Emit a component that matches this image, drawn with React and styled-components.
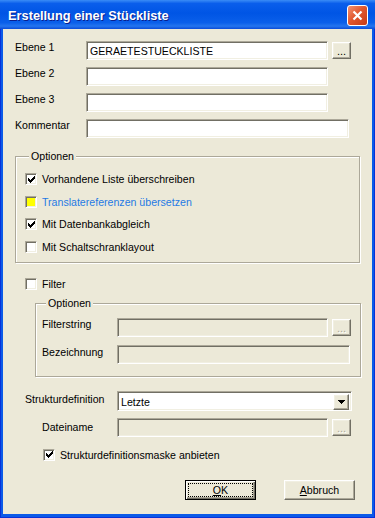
import React from "react";
import styled, { createGlobalStyle } from "styled-components";

const GlobalStyle = createGlobalStyle`
  html, body {
    margin: 0;
    padding: 0;
    background: #ffffff;
  }
  body {
    font-family: "Liberation Sans", Arial, sans-serif;
    font-size: 10.6px;
    color: #000000;
  }
  * {
    box-sizing: border-box;
  }
`;

const Window = styled.div`
  width: 375px;
  height: 518px;
  display: flex;
  flex-direction: column;
  background: #0b5ae8;
  box-shadow: inset 1px 0 0 #0831d9, inset -1px 0 0 #0831d9, inset 0 -1px 0 #0831d9;
`;

const TitleBar = styled.div`
  height: 29px;
  flex: none;
  display: flex;
  align-items: center;
  justify-content: space-between;
  padding: 2px 7px 0 8px;
  background: linear-gradient(
    180deg,
    #3a8cf6 0%,
    #0a5eeb 12%,
    #0055e5 45%,
    #0a5fea 78%,
    #2475ef 90%,
    #0a4bd8 100%
  );
`;

const Title = styled.span`
  color: #ffffff;
  font-weight: bold;
  font-size: 12.8px;
  text-shadow: 1px 1px 0 #0a1e8c;
`;

const CloseButton = styled.div`
  width: 21px;
  height: 21px;
  border: 1px solid #ffffff;
  border-radius: 3px;
  background: linear-gradient(135deg, #f29373 0%, #e2582f 45%, #c63a14 100%);
  display: flex;
  align-items: center;
  justify-content: center;
`;

const Client = styled.div`
  flex: 1;
  margin: 0 3px 4px;
  background: #ece9d8;
  padding: 12px 0 0 12px;
  display: flex;
  flex-direction: column;
`;

const Stack = styled.div`
  display: flex;
  flex-direction: column;
  gap: ${(p) => p.$gap}px;
`;

const FieldRow = styled.div`
  display: flex;
  align-items: center;
  height: ${(p) => p.$h || 19}px;
  margin-top: ${(p) => p.$mt || 0}px;
  padding-left: ${(p) => p.$indent || 0}px;
`;

const Label = styled.span`
  width: ${(p) => p.$w}px;
  flex: none;
  align-self: flex-start;
  line-height: 13px;
  padding-top: ${(p) => p.$dy || 0}px;
  white-space: nowrap;
`;

const TextField = styled.div`
  width: ${(p) => p.$w}px;
  height: 19px;
  flex: none;
  background: ${(p) => (p.$disabled ? "#ece9d8" : "#ffffff")};
  border: 1px solid;
  border-color: #aca899 #ffffff #ffffff #aca899;
  box-shadow: inset 1px 1px 0 #716f64, inset -1px -1px 0 #f1efe2;
  padding: 2px 0 0 3px;
  line-height: 14px;
  white-space: nowrap;
  overflow: hidden;
`;

const Raised = styled.div`
  background: #ece9d8;
  border: 1px solid;
  border-color: #ffffff #716f64 #716f64 #ffffff;
  box-shadow: inset -1px -1px 0 #aca899, inset 1px 1px 0 #f1efe2;
`;

const DotsButton = styled(Raised)`
  width: 19px;
  height: 17px;
  flex: none;
  margin-left: 4px;
  display: flex;
  justify-content: center;
  align-items: flex-end;
  padding-bottom: 3px;
  line-height: 8px;
  font-size: 11px;
  color: ${(p) => (p.$disabled ? "#aca899" : "#000000")};
  text-shadow: ${(p) => (p.$disabled ? "1px 1px 0 #ffffff" : "none")};
`;

const Combo = styled(TextField)`
  height: 20px;
  display: flex;
  align-items: flex-start;
  justify-content: space-between;
  padding: 2px 2px 0 3px;
`;

const ComboText = styled.span`
  line-height: 14px;
  padding-top: 1px;
`;

const ComboArrow = styled(Raised)`
  width: 16px;
  height: 16px;
  display: flex;
  align-items: center;
  justify-content: center;
`;

const Group = styled.fieldset`
  margin: ${(p) => p.$mt}px 0 0 ${(p) => p.$ml}px;
  width: ${(p) => p.$w}px;
  min-width: 0;
  padding: ${(p) => p.$pad};
  border: 1px solid #aca899;
  box-shadow: inset 1px 1px 0 #ffffff, 1px 1px 0 #ffffff;
  display: flex;
  flex-direction: column;
  gap: ${(p) => p.$gap}px;
`;

const Legend = styled.legend`
  padding: 0 2px;
  margin-left: 4px;
  line-height: 13px;
  background: #ece9d8;
`;

const CheckRow = styled.div`
  display: flex;
  align-items: center;
  gap: 5px;
  height: 14px;
  margin-top: ${(p) => p.$mt || 0}px;
  padding-left: ${(p) => p.$indent || 0}px;
  color: ${(p) => (p.$blue ? "#1f7ae4" : "#000000")};
  white-space: nowrap;
`;

const Box = styled.span`
  width: 12px;
  height: 12px;
  flex: none;
  background: ${(p) => (p.$yellow ? "#ffff00" : "#ffffff")};
  border: 1px solid;
  border-color: #aca899 #ffffff #ffffff #aca899;
  box-shadow: inset 1px 1px 0 #716f64, inset -1px -1px 0 #f1efe2;
  display: flex;
  align-items: center;
  justify-content: center;
`;

const ButtonRow = styled.div`
  display: flex;
  justify-content: flex-end;
  gap: 28px;
  margin-top: 18px;
  padding-right: 17px;
`;

const PushButton = styled(Raised)`
  width: 71px;
  height: 20px;
  display: flex;
  align-items: center;
  justify-content: center;
  padding: 2px;
  ${(p) =>
    p.$default &&
    `
    border: 1px solid #000000;
    box-shadow: inset 1px 1px 0 #ffffff, inset -1px -1px 0 #716f64, inset -2px -2px 0 #aca899;
  `}
`;

const FocusRing = styled.span`
  flex: 1;
  align-self: stretch;
  display: flex;
  align-items: center;
  justify-content: center;
  border: 1px dotted ${(p) => (p.$on ? "#000000" : "transparent")};
  line-height: 12px;
`;

const CHECK_TOPS = [2, 3, 4, 3, 2, 1, 0];

function CheckMark() {
  return (
    <svg width="7" height="7" viewBox="0 0 7 7" shapeRendering="crispEdges">
      {CHECK_TOPS.map((t, i) => (
        <rect key={i} x={i} y={t} width="1" height="3" fill="#000" />
      ))}
    </svg>
  );
}

function Check({ checked, yellow, blue, children, indent, mt }) {
  return (
    <CheckRow $blue={blue} $indent={indent} $mt={mt}>
      <Box $yellow={yellow}>{checked && <CheckMark />}</Box>
      <span>{children}</span>
    </CheckRow>
  );
}

function CloseIcon() {
  return (
    <svg width="11" height="11" viewBox="0 0 11 11">
      <path d="M1.5 1.5 L9.5 9.5 M9.5 1.5 L1.5 9.5" stroke="#fff" strokeWidth="2.2" />
    </svg>
  );
}

function ArrowIcon() {
  return (
    <svg width="7" height="4" viewBox="0 0 7 4" shapeRendering="crispEdges">
      <rect x="0" y="0" width="7" height="1" fill="#000" />
      <rect x="1" y="1" width="5" height="1" fill="#000" />
      <rect x="2" y="2" width="3" height="1" fill="#000" />
      <rect x="3" y="3" width="1" height="1" fill="#000" />
    </svg>
  );
}

export default function App() {
  return (
    <>
      <GlobalStyle />
      <Window>
        <TitleBar>
          <Title>Erstellung einer Stückliste</Title>
          <CloseButton>
            <CloseIcon />
          </CloseButton>
        </TitleBar>
        <Client>
          <Stack $gap={7}>
            <FieldRow>
              <Label $w={71}>Ebene 1</Label>
              <TextField $w={242}>GERAETESTUECKLISTE</TextField>
              <DotsButton>...</DotsButton>
            </FieldRow>
            <FieldRow>
              <Label $w={71}>Ebene 2</Label>
              <TextField $w={242} />
            </FieldRow>
            <FieldRow>
              <Label $w={71}>Ebene 3</Label>
              <TextField $w={242} />
            </FieldRow>
            <FieldRow>
              <Label $w={71}>Kommentar</Label>
              <TextField $w={263} />
            </FieldRow>
          </Stack>

          <Group $mt={12} $ml={0} $w={345} $pad="9px 0 8px 9px" $gap={8.5}>
            <Legend>Optionen</Legend>
            <Check checked>Vorhandene Liste überschreiben</Check>
            <Check yellow blue>
              Translatereferenzen übersetzen
            </Check>
            <Check checked>Mit Datenbankabgleich</Check>
            <Check>Mit Schaltschranklayout</Check>
          </Group>

          <Check indent={10} mt={14}>
            Filter
          </Check>

          <Group $mt={6} $ml={20} $w={326} $pad="8px 0 12px 6px" $gap={8}>
            <Legend>Optionen</Legend>
            <FieldRow>
              <Label $w={75}>Filterstring</Label>
              <TextField $w={211} $disabled />
              <DotsButton $disabled>...</DotsButton>
            </FieldRow>
            <FieldRow>
              <Label $w={75} $dy={1}>
                Bezeichnung
              </Label>
              <TextField $w={233} $disabled />
            </FieldRow>
          </Group>

          <FieldRow $mt={14} $h={20} $indent={10}>
            <Label $w={92} $dy={2}>
              Strukturdefinition
            </Label>
            <Combo $w={235}>
              <ComboText>Letzte</ComboText>
              <ComboArrow>
                <ArrowIcon />
              </ComboArrow>
            </Combo>
          </FieldRow>

          <FieldRow $mt={7} $indent={27}>
            <Label $w={75} $dy={3}>
              Dateiname
            </Label>
            <TextField $w={211} $disabled />
            <DotsButton $disabled>...</DotsButton>
          </FieldRow>

          <Check checked indent={28} mt={11}>
            Strukturdefinitionsmaske anbieten
          </Check>

          <ButtonRow>
            <PushButton $default>
              <FocusRing $on>
                <span>
                  <u>O</u>K
                </span>
              </FocusRing>
            </PushButton>
            <PushButton>
              <FocusRing>
                <span>
                  <u>A</u>bbruch
                </span>
              </FocusRing>
            </PushButton>
          </ButtonRow>
        </Client>
      </Window>
    </>
  );
}
